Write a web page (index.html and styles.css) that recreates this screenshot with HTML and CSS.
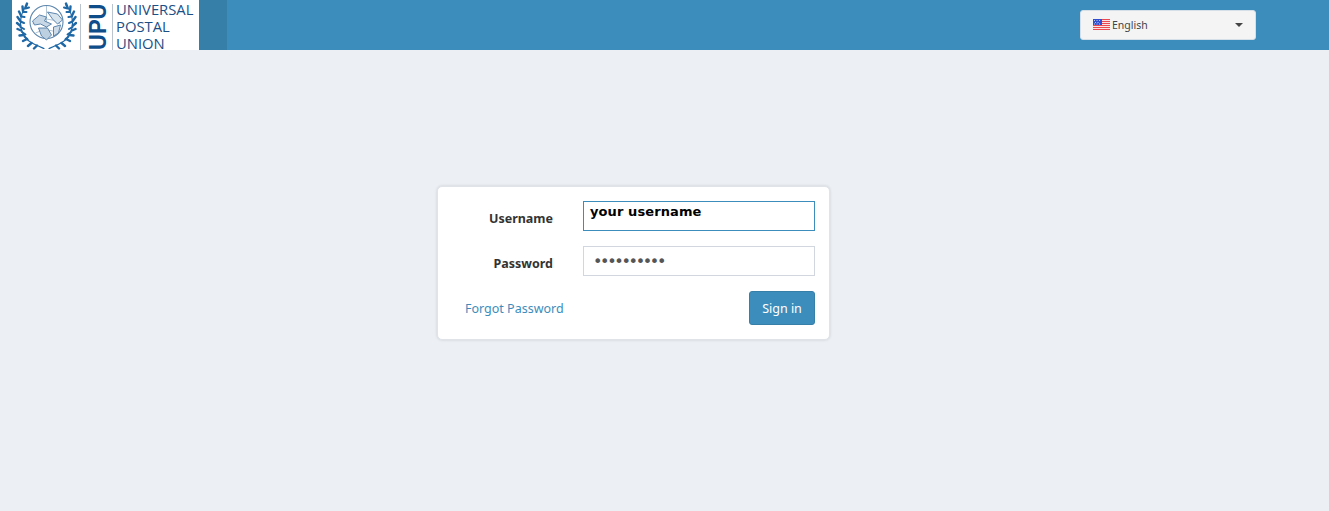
FILE: index.html
```html
<!DOCTYPE html>
<html lang="en">
<head>
  <meta charset="UTF-8" />
  <title>Universal Postal Union - Sign in</title>
  <link rel="stylesheet" href="styles.css">
</head>
<body>

  <!-- Top bar -->
  <header class="topbar">
    <div class="logo-box">
      <div class="logo">
        <svg class="emblem" width="62" height="50" viewBox="0 0 62 50" fill="none">
          <!-- laurel branch, drawn once and mirrored -->
          <g id="branch" stroke="#1f68a6" stroke-linecap="round">
            <path d="M12 5 C4 15 2 31 14 41 C18 44 23 46 29 48.5" stroke-width="1.2"/>
            <path d="M10.5 7.5 L12 3.5 M8 11 L7.5 6.5 M6 15.5 L4 11.5 M5 20.5 L2.5 17 M5 25.5 L2 23 M6 30.5 L2.5 29 M8.5 35 L4.5 35.5 M12 39 L8 41 M16.5 43 L13 46 M22 45.5 L19 48.5" stroke-width="2.4"/>
            <path d="M10.5 8.5 L14 7.5 M8 12 L11.5 12 M6 16.5 L9.5 17 M5.5 21.5 L9 23 M5.5 27 L9 29 M7 32 L10.5 34.5 M9.5 36.5 L12.5 39.5" stroke-width="2"/>
          </g>
          <use href="#branch" transform="matrix(-1 0 0 1 63 0)"/>
          <!-- globe and letter carriers -->
          <g transform="translate(1.5 0)">
            <circle cx="30" cy="22" r="16.5" stroke="#5c86ad" stroke-width="1.1"/>
            <path d="M16 24 Q30 14 44 24 M19 33 Q30 27 41 33 M30 6 V38" stroke="#9db6cc" stroke-width=".8"/>
            <path d="M16 21 L23 15 L30 17 L28 21 L35 24 L30 27 L24 24 L18 25 Z" fill="#c7d7e5" stroke="#4f7ca6" stroke-width=".9"/>
            <path d="M31 12 L41 14 L46 20 L41 24 L36 19 Z" fill="#d7e3ed" stroke="#4f7ca6" stroke-width=".9"/>
            <path d="M22 28 L31 28 L35 35 L30 40 L25 36 Z" fill="#bcd0e1" stroke="#4f7ca6" stroke-width=".9"/>
            <path d="M37 27 L44 25 L42 33 L37 36 Z" fill="#cddbe8" stroke="#4f7ca6" stroke-width=".9"/>
          </g>
        </svg>
        <span class="logo-rule rule-first"></span>
        <span class="logo-upu">UPU</span>
        <span class="logo-rule rule-second"></span>
        <div class="logo-name">
          <span>UNIVERSAL</span>
          <span>POSTAL</span>
          <span>UNION</span>
        </div>
      </div>
    </div>
    <div class="lang-select">
      <svg class="flag" width="17" height="11" viewBox="0 0 17 11">
        <rect width="17" height="11" fill="#fbe3e3"/>
        <path d="M0 0h17v1H0zM0 2h17v1H0zM0 4h17v1H0zM0 6h17v1H0zM0 8h17v1H0zM0 10h17v1H0z" fill="#ea4a4f"/>
        <rect width="9" height="6" fill="#2f4fd0"/>
        <path d="M1 1.5h1M3.5 1.5h1M6 1.5h1M2 3.5h1M4.5 3.5h1M1 5h1M3.5 5h1M6 5h1" stroke="#dfe6ff" stroke-width=".8"/>
      </svg>
      <span class="lang-name">English</span>
      <span class="caret"></span>
    </div>
  </header>

  <!-- Login -->
  <main class="content">
    <form class="login-card">
      <div class="form-row">
        <label class="form-label" for="username">Username</label>
        <div class="fake-input active" id="username">your username</div>
      </div>
      <div class="form-row">
        <label class="form-label" for="password">Password</label>
        <input class="pass-input" type="password" id="password" value="1234567890">
      </div>
      <div class="form-actions">
        <a class="forgot" href="#">Forgot Password</a>
        <button class="signin-btn" type="button">Sign in</button>
      </div>
    </form>
  </main>

</body>
</html>
```

FILE: styles.css
```css
* {
  margin: 0;
  padding: 0;
  box-sizing: border-box;
}

body {
  height: 100vh;
  background: #ecf0f5;
  font-family: 'Noto Sans', 'Open Sans', sans-serif;
  font-size: 12.5px;
  color: #333;
  display: flex;
  flex-direction: column;
  overflow: hidden;
}

.topbar {
  height: 50px;
  background: #3c8dbc;
  display: flex;
  justify-content: space-between;
  flex-shrink: 0;
}

.logo-box {
  width: 227px;
  height: 50px;
  background: #367fa9;
  padding-left: 12px;
}

.logo {
  width: 187px;
  height: 50px;
  background: #fff;
  display: flex;
  align-items: stretch;
  overflow: hidden;
}

.emblem {
  flex-shrink: 0;
  margin-left: 3px;
}

.logo-rule {
  width: 1px;
  height: 46px;
  margin-top: 4px;
  background: #b9c4cf;
  flex-shrink: 0;
}

.rule-first {
  margin-left: 3px;
}

.rule-second {
  margin-left: 2px;
}

.logo-upu {
  width: 24px;
  height: 50px;
  margin-left: 5px;
  writing-mode: vertical-rl;
  transform: rotate(180deg) scaleX(1.08);
  font-family: 'Liberation Sans', sans-serif;
  font-weight: 700;
  font-size: 22px;
  line-height: 24px;
  text-align: left;
  color: #0f4c8a;
  flex-shrink: 0;
}

.logo-name {
  display: flex;
  flex-direction: column;
  margin-left: 3px;
  margin-top: 1px;
  font-family: 'Open Sans', sans-serif;
  font-size: 14.8px;
  line-height: 17px;
  color: #1c4f86;
}

.lang-select {
  width: 176px;
  height: 30px;
  margin: 10px 73px 0 0;
  padding: 0 12px 1px;
  background: #f4f4f4;
  border: 1px solid #d5dfe8;
  border-radius: 3px;
  display: flex;
  align-items: center;
  font-size: 10.5px;
  color: #444;
}

.flag {
  margin-right: 2px;
}

.caret {
  margin-left: auto;
  border-top: 4px solid #444;
  border-left: 4px solid transparent;
  border-right: 4px solid transparent;
}

.content {
  flex: 1;
  padding: 136px 0 0 437px;
}

.login-card {
  width: 393px;
  height: 154px;
  background: #fff;
  border: 1px solid #e0e3e8;
  border-radius: 5px;
  box-shadow: 0 0 3px rgba(0, 0, 0, 0.14);
  padding: 14px 14px 0 27px;
}

.form-row {
  display: flex;
  align-items: center;
  height: 30px;
  margin-bottom: 15px;
}

.form-label {
  width: 88px;
  padding-top: 4px;
  text-align: right;
  font-weight: 700;
  margin-right: 30px;
  color: #333;
  flex-shrink: 0;
}

.fake-input,
.pass-input {
  width: 232px;
  height: 30px;
  background: #fff;
  border: 1px solid #d2d6de;
}

.fake-input.active {
  border-color: #3c8dbc;
  font-family: 'DejaVu Sans', sans-serif;
  font-weight: 700;
  font-size: 13px;
  letter-spacing: .1px;
  line-height: 19px;
  color: #000;
  padding: 0 6px;
}

.pass-input {
  padding: 0 9px;
  font-family: 'DejaVu Sans', sans-serif;
  font-size: 16px;
  letter-spacing: -2.33px;
  color: #555;
  outline: none;
}

.form-actions {
  display: flex;
  justify-content: space-between;
  align-items: center;
}

.forgot {
  color: #3c8dbc;
  text-decoration: none;
}

.signin-btn {
  width: 66px;
  height: 34px;
  background: #3c8dbc;
  border: 1px solid #367fa9;
  border-radius: 3px;
  color: #fff;
  font-family: 'Noto Sans', sans-serif;
  font-size: 12.5px;
}
```
